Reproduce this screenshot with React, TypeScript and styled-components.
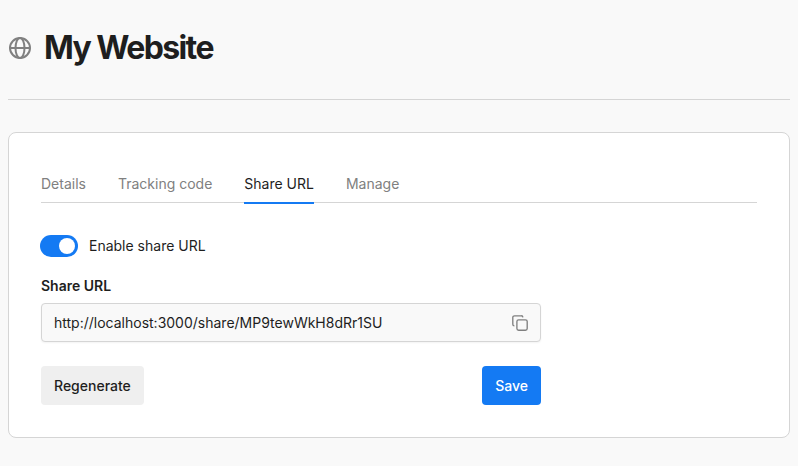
import React from "react";
import styled, { createGlobalStyle, css } from "styled-components";

const GlobalStyle = createGlobalStyle`
  *, *::before, *::after { box-sizing: border-box; }
  body {
    margin: 0;
    background: #f9f9f9;
    color: #1e1e1e;
    font-family: Inter, "Liberation Sans", sans-serif;
    font-size: 14px;
    line-height: 20px;
  }
  button, input { font: inherit; color: inherit; }
`;

const Page = styled.main`
  height: 466px;
  padding: 0 8px;
  overflow: hidden;
`;

const Header = styled.header`
  display: flex;
  align-items: center;
  gap: 12px;
  height: 100px;
  padding-bottom: 4px;
  border-bottom: 1px solid #d5d5d5;
`;

const Title = styled.h1`
  margin: 0;
  font-size: 32px;
  line-height: 40px;
  font-weight: 700;
  letter-spacing: -1.6px;
`;

const Panel = styled.section`
  height: 306px;
  margin-top: 32px;
  padding: 32px;
  background: #fff;
  border: 1px solid #d5d5d5;
  border-radius: 8px;
`;

const Tabs = styled.nav`
  display: flex;
  gap: 32px;
  height: 38px;
  border-bottom: 1px solid #d5d5d5;
`;

const Tab = styled.button<{ $active?: boolean }>`
  height: 39px;
  padding: 0;
  background: none;
  border: 0;
  border-bottom: 2px solid transparent;
  color: #808080;
  ${(p) =>
    p.$active &&
    css`
      color: #1e1e1e;
      border-color: #147af3;
    `}
`;

const ToggleRow = styled.label`
  display: flex;
  align-items: center;
  gap: 11px;
  margin: 32px 0 0 -1px;
  height: 22px;
`;

const Toggle = styled.span`
  display: flex;
  align-items: center;
  justify-content: flex-end;
  width: 38px;
  height: 22px;
  padding: 3px;
  border-radius: 11px;
  background: #147af3;
`;

const Knob = styled.span`
  width: 16px;
  height: 16px;
  border-radius: 50%;
  background: #fff;
`;

const Form = styled.div`
  width: 500px;
  margin-top: 19px;
`;

const Label = styled.div`
  font-weight: 600;
`;

const Field = styled.div`
  display: flex;
  align-items: center;
  justify-content: space-between;
  height: 39px;
  margin-top: 7px;
  padding: 0 12px;
  background: #f9f9f9;
  border: 1px solid #d5d5d5;
  border-radius: 4px;
  box-shadow: 0 1px 2px rgba(0, 0, 0, 0.05);
`;

const Actions = styled.div`
  display: flex;
  justify-content: space-between;
  margin-top: 24px;
`;

const Button = styled.button<{ $primary?: boolean }>`
  height: 39px;
  padding: 0 13px;
  border: 0;
  border-radius: 4px;
  font-weight: 500;
  background: ${(p) => (p.$primary ? "#147af3" : "#efefef")};
  color: ${(p) => (p.$primary ? "#fff" : "#1e1e1e")};
`;

const GlobeIcon = () => (
  <svg width="24" height="24" viewBox="0 0 24 24" fill="none" stroke="#808080" strokeWidth="2">
    <circle cx="12" cy="12" r="10" />
    <ellipse cx="12" cy="12" rx="4.5" ry="10" />
    <path d="M2 12h20" />
  </svg>
);

const CopyIcon = () => (
  <svg width="16" height="16" viewBox="0 0 16 16" fill="none" stroke="#808080" strokeWidth="1.35">
    <rect x="4.9" y="4.9" width="10.3" height="10.3" rx="1.7" />
    <path d="M2.4 10.9A1.7 1.7 0 0 1 .8 9.2V2.5A1.7 1.7 0 0 1 2.5.8h6.7a1.7 1.7 0 0 1 1.7 1.6" />
  </svg>
);

const tabs = ["Details", "Tracking code", "Share URL", "Manage"];

export default function App() {
  return (
    <Page>
      <GlobalStyle />
      <Header>
        <GlobeIcon />
        <Title>My Website</Title>
      </Header>
      <Panel>
        <Tabs>
          {tabs.map((name) => (
            <Tab key={name} $active={name === "Share URL"}>
              {name}
            </Tab>
          ))}
        </Tabs>
        <ToggleRow>
          <Toggle>
            <Knob />
          </Toggle>
          Enable share URL
        </ToggleRow>
        <Form>
          <Label>Share URL</Label>
          <Field>
            <span>http://localhost:3000/share/MP9tewWkH8dRr1SU</span>
            <CopyIcon />
          </Field>
          <Actions>
            <Button>Regenerate</Button>
            <Button $primary>Save</Button>
          </Actions>
        </Form>
      </Panel>
    </Page>
  );
}
